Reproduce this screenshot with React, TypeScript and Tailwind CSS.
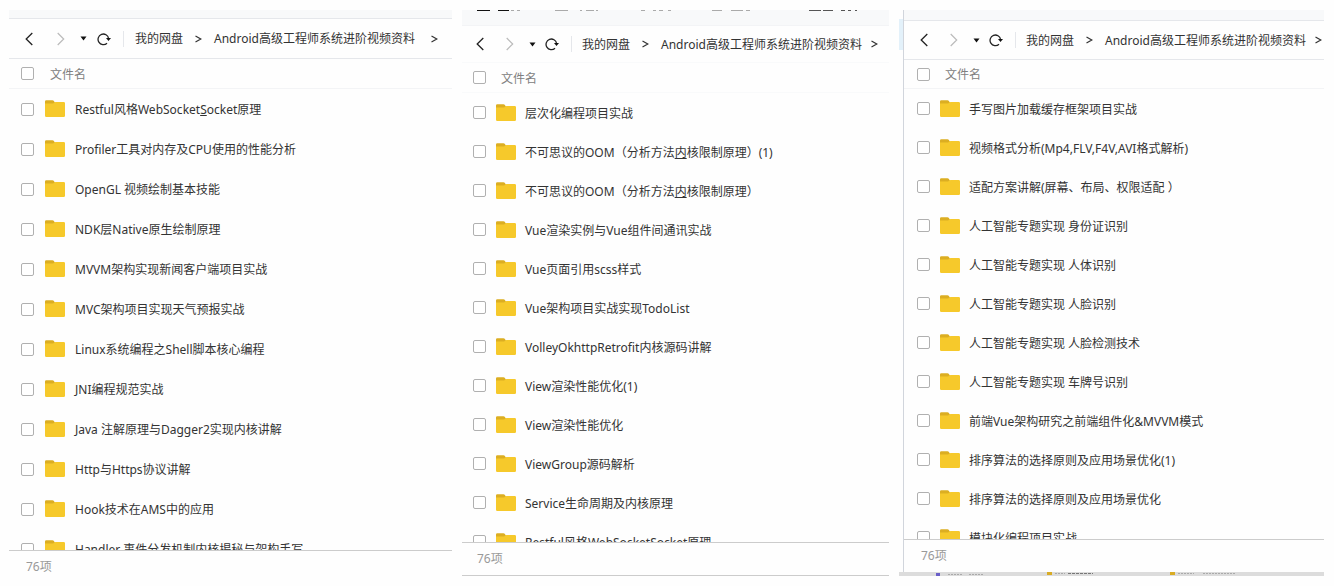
import React from 'react';
import clsx from 'clsx';

interface FileItem {
  name: string;
  // character shown underlined, counted from the start of the name
  mark?: number;
}

interface Panel {
  id: string;
  compact: boolean;
  wrapper: string;
  strip: string;
  toolbar: string;
  head: string;
  list: string;
  row: string;
  footer: string;
  files: FileItem[];
}

const panels: Panel[] = [
  {
    id: 'left',
    compact: false,
    wrapper: '',
    strip: 'h-[9px] border-gray-200',
    toolbar: 'h-10 pl-4 border-gray-200',
    head: 'h-[30px] pl-3 gap-4 border-gray-100',
    list: 'max-h-[461px] pl-3',
    row: 'h-10',
    footer: 'h-8 pl-[17px]',
    files: [
      { name: 'Restful风格WebSocketSocket原理', mark: 18 },
      { name: 'Profiler工具对内存及CPU使用的性能分析' },
      { name: 'OpenGL 视频绘制基本技能' },
      { name: 'NDK层Native原生绘制原理' },
      { name: 'MVVM架构实现新闻客户端项目实战' },
      { name: 'MVC架构项目实现天气预报实战' },
      { name: 'Linux系统编程之Shell脚本核心编程' },
      { name: 'JNI编程规范实战' },
      { name: 'Java 注解原理与Dagger2实现内核讲解' },
      { name: 'Http与Https协议讲解' },
      { name: 'Hook技术在AMS中的应用' },
      { name: 'Handler 事件分发机制内核揭秘与架构手写' },
    ],
  },
  {
    id: 'middle',
    compact: true,
    wrapper: '',
    strip: 'h-4 border-gray-100',
    toolbar: 'h-[37px] pl-3.5 border-gray-50',
    head: 'h-[30px] pl-[11px] gap-[15px] border-gray-50',
    list: 'max-h-[449px] pl-[11px]',
    row: 'h-[39px]',
    footer: 'h-[34px] pl-[15px] border-b',
    files: [
      { name: '层次化编程项目实战' },
      { name: '不可思议的OOM（分析方法内核限制原理）(1)', mark: 13 },
      { name: '不可思议的OOM（分析方法内核限制原理）', mark: 13 },
      { name: 'Vue渲染实例与Vue组件间通讯实战' },
      { name: 'Vue页面引用scss样式' },
      { name: 'Vue架构项目实战实现TodoList' },
      { name: 'VolleyOkhttpRetrofit内核源码讲解' },
      { name: 'View渲染性能优化(1)' },
      { name: 'View渲染性能优化' },
      { name: 'ViewGroup源码解析' },
      { name: 'Service生命周期及内核原理' },
      { name: 'Restful风格WebSocketSocket原理' },
    ],
  },
  {
    id: 'right',
    compact: true,
    wrapper: 'border-l border-gray-300',
    strip: 'h-[11px] border-gray-200',
    toolbar: 'h-[39px] pl-4 border-gray-200',
    head: 'h-[29px] pl-[13px] gap-[15px] border-gray-100',
    list: 'max-h-[450px] pl-[13px]',
    row: 'h-[39px]',
    footer: 'h-[33px] pl-[17px]',
    files: [
      { name: '手写图片加载缓存框架项目实战' },
      { name: '视频格式分析(Mp4,FLV,F4V,AVI格式解析)' },
      { name: '适配方案讲解(屏幕、布局、权限适配 ）' },
      { name: '人工智能专题实现 身份证识别' },
      { name: '人工智能专题实现 人体识别' },
      { name: '人工智能专题实现 人脸识别' },
      { name: '人工智能专题实现 人脸检测技术' },
      { name: '人工智能专题实现 车牌号识别' },
      { name: '前端Vue架构研究之前端组件化&MVVM模式' },
      { name: '排序算法的选择原则及应用场景优化(1)' },
      { name: '排序算法的选择原则及应用场景优化' },
      { name: '模块化编程项目实战' },
    ],
  },
];

function FolderIcon() {
  return (
    <svg width="20" height="18" viewBox="0 0 20 18" className="shrink-0" aria-hidden="true">
      <path d="M0 1.500A1.300 1.300 0 0 1 1.300.2h6.200c.5 0 .9.200 1.200.6L10.200 3 8 6H0z" fill="#dcae22" />
      <path d="M0 3.600h7.400c.6 0 1-.2 1.400-.6l.5-.5c.4-.4.8-.6 1.300-.6h8.100A1.300 1.300 0 0 1 20 3.200v12.500a1.300 1.300 0 0 1-1.300 1.300H1.300A1.300 1.300 0 0 1 0 15.700z" fill="#f6c92b" />
    </svg>
  );
}

function Checkbox({ id }: { id: string }) {
  return (
    <input
      id={id}
      type="checkbox"
      className="w-[13px] h-[13px] shrink-0 appearance-none rounded-[2px] border border-[#b0b0b0] bg-white checked:bg-blue-500"
    />
  );
}

function FileName({ name, mark }: FileItem) {
  if (mark === undefined) return <>{name}</>;
  return (
    <>
      {name.slice(0, mark)}
      <u>{name[mark]}</u>
      {name.slice(mark + 1)}
    </>
  );
}

function Separator() {
  return (
    <svg width="7" height="8" viewBox="0 0 7 8" className="shrink-0" fill="none" stroke="#333" strokeWidth="1.2" aria-hidden="true">
      <path d="M.5 1l5.300 3L.5 7" />
    </svg>
  );
}

function Toolbar({ panel }: { panel: Panel }) {
  const { compact, toolbar } = panel;
  return (
    <nav className={clsx('flex items-center border-b overflow-hidden whitespace-nowrap text-[#333]', toolbar)}>
      <button type="button" aria-label="后退" className="shrink-0">
        <svg width="8" height="14" viewBox="0 0 8 14" fill="none" stroke="#222" strokeWidth="1.3">
          <path d="M7.300 1L1.200 7l6.100 6" />
        </svg>
      </button>
      <button type="button" aria-label="前进" className={clsx('shrink-0', compact ? 'ml-[22px]' : 'ml-6')}>
        <svg width="8" height="14" viewBox="0 0 8 14" fill="none" stroke="#bbb" strokeWidth="1.200">
          <path d="M.7 1l6 6-6 6" />
        </svg>
      </button>
      <button type="button" aria-label="历史" className="shrink-0 ml-[15px]">
        <svg width="7" height="5" viewBox="0 0 7 5">
          <path d="M.5.500h6L3.500 4.500z" fill="#111" />
        </svg>
      </button>
      <button type="button" aria-label="刷新" className={clsx('shrink-0', compact ? 'ml-[9px]' : 'ml-2.5')}>
        <svg width="14" height="14" viewBox="0 0 14 14" fill="none">
          <path d="M10 11.200A5.300 5.300 0 1 1 11.600 6.500" stroke="#222" strokeWidth="1.300" />
          <path d="M9 6h5l-2.500 2.900z" fill="#111" />
        </svg>
      </button>
      <span className="ml-3 h-4 w-px shrink-0 bg-gray-200" />
      <a href="#root" className={compact ? 'ml-2.5 pt-0.5' : 'ml-[11px]'}>我的网盘</a>
      <span className="mx-3 flex"><Separator /></span>
      <a href="#folder" className={clsx(compact && 'pt-0.5')}>Android高级工程师系统进阶视频资料</a>
      <span className={clsx('flex', compact ? 'ml-[9px]' : 'ml-4')}><Separator /></span>
    </nav>
  );
}

// lower edge of the action bar that is scrolled out above the middle list
function ActionBarEdge() {
  return (
    <svg width="400" height="2" viewBox="0 0 400 2" fill="none" strokeWidth="1" aria-hidden="true">
      <path d="M15 .5h13M36 .5h11" stroke="#111" />
      <path d="M49 .5h3M55 .5h3M93 .5h13M118 .5h2M124 .5h8M134 .5h2M179 .5h4M191 .5h3M197 .5h4M206 .5h3M250 .5h10M269 .5h12M284 .5h4" stroke="#aaa" />
      <path d="M347 .5h12M361 .5h10M379 .5h4M386 .5h3M393 .5h2" stroke="#555" />
    </svg>
  );
}

function TaskStrip() {
  return (
    <div className="h-1 overflow-hidden bg-[#dcdcdc]">
      <svg width="360" height="4" viewBox="0 0 360 4" aria-hidden="true">
        <path d="M37 1h4v3h-4z" fill="#6a5fc8" />
        <path d="M148 0h5v3h-5zM271 0h5v3h-5z" fill="#d9ac25" />
        <path d="M49 2.500h14M70 2.500h14M156 1.500h10M279 1.500h16M304 1.500h32" stroke="#aaa" strokeDasharray="2 1" />
        <path d="M169 1.500h25" stroke="#777" strokeDasharray="3 1" />
      </svg>
    </div>
  );
}

function FilePanel({ panel }: { panel: Panel }) {
  return (
    <section className={clsx('min-w-0', panel.wrapper)}>
      <div className={clsx('border-b bg-[#f8f9fa] overflow-hidden', panel.strip)}>
        {panel.id === 'middle' && <ActionBarEdge />}
      </div>
      <Toolbar panel={panel} />
      <div className={clsx('flex items-center border-b text-[#808080]', panel.head)}>
        <Checkbox id={`${panel.id}-all`} />
        <label htmlFor={`${panel.id}-all`} className="pt-0.5">文件名</label>
      </div>
      <ul className={clsx('overflow-hidden text-[#333]', panel.list)}>
        {panel.files.map((file, i) => (
          <li key={file.name} className={clsx('flex items-center whitespace-nowrap', panel.row)}>
            <Checkbox id={`${panel.id}-${i}`} />
            <label htmlFor={`${panel.id}-${i}`} className={clsx('flex items-center', panel.compact ? 'ml-2.5 gap-[9px]' : 'ml-[11px] gap-2.5')}>
              <FolderIcon />
              <span className="pt-0.5"><FileName {...file} /></span>
            </label>
          </li>
        ))}
      </ul>
      <footer className={clsx('flex items-center border-t border-[#ccc] text-[#999]', panel.footer)}>76项</footer>
    </section>
  );
}

export default function App() {
  const [left, middle, right] = panels;
  return (
    <main className="grid grid-cols-[443fr_427fr_425fr] items-start gap-2.5 bg-[#fefefe] pt-2.5 pr-2.5 pb-2.5 pl-[9px] font-['Noto_Sans','Noto_Sans_CJK_SC',sans-serif] text-xs">
      <FilePanel panel={left} />
      <FilePanel panel={middle} />
      <div className="min-w-0">
        <div className="flex">
          <div className="w-1 shrink-0 pt-[9px]">
            <div className="h-[31px] bg-[#e3f1fa]" />
          </div>
          <div className="min-w-0 flex-1">
            <FilePanel panel={right} />
          </div>
        </div>
        <TaskStrip />
      </div>
    </main>
  );
}
